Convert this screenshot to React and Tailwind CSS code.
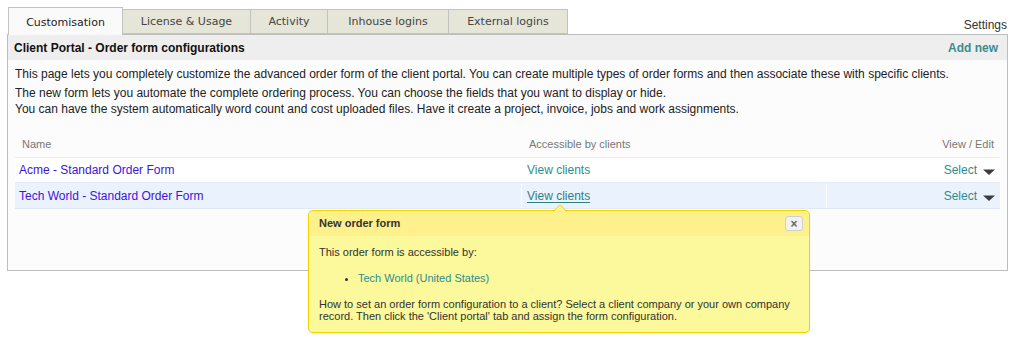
import React from 'react';

const tabs = ['Customisation', 'License & Usage', 'Activity', 'Inhouse logins', 'External logins'];
const tabWidths = ['w-[115px]', 'w-[128px]', 'w-[77px]', 'w-[121px]', 'w-[119px]'];

function Caret() {
  return (
    <svg width="12" height="7" viewBox="0 0 12 7" className="ml-[6px] mt-[4px]">
      <path d="M0 0.5 L12 0.5 L6 6 Z" fill="#3d3d3d" />
    </svg>
  );
}

export default function App() {
  return (
    <div className="relative w-[1015px] h-[344px] bg-white font-['Liberation_Sans',Arial,sans-serif] text-[12px] text-[#222]">
      {/* Tabs */}
      <div className="flex items-end px-[8px] pt-[7px] h-[34px]">
        {tabs.map((t, i) =>
          i === 0 ? (
            <div
              key={t}
              className={`${tabWidths[i]} h-[28px] pt-[3px] -mb-px relative z-10 bg-[#fafafa] border border-b-0 border-[#c2c2c2] flex items-center justify-center font-['DejaVu_Sans',Verdana,sans-serif] text-[11px] text-[#222]`}
            >
              {t}
            </div>
          ) : (
            <div
              key={t}
              className={`${tabWidths[i]} h-[25px] pt-[2px] bg-[#e6e6d8] border border-l-0 border-[#c2c2c2] flex items-center justify-center font-['DejaVu_Sans',Verdana,sans-serif] text-[11px] text-[#444]`}
            >
              {t}
            </div>
          )
        )}
        <div className="ml-auto pb-[3px] text-[12px] text-[#333] leading-none">Settings</div>
      </div>

      {/* Panel */}
      <div className="mx-[7px] h-[237px] border border-[#bdbdbd] bg-[#fcfcfc]">
        <div className="h-[25px] bg-[#eeeeee] flex items-center justify-between pl-[6px] pr-[9px]">
          <span className="font-bold text-[12px] text-[#111]">Client Portal - Order form configurations</span>
          <span className="font-bold text-[12px] text-[#3a8d8d]">Add new</span>
        </div>

        <div className="px-[7px] pt-[6px]">
          <p className="leading-[16px]">
            This page lets you completely customize the advanced order form of the client portal. You can create multiple types of order forms and then associate these with specific clients.
          </p>
          <p className="leading-[16px] mt-[3px]">
            The new form lets you automate the complete ordering process. You can choose the fields that you want to display or hide.
            <br />
            You can have the system automatically word count and cost uploaded files. Have it create a project, invoice, jobs and work assignments.
          </p>

          {/* Table */}
          <div className="mt-[15px] w-[985px]">
            <div className="flex h-[26px] items-center border-b border-[#ececec] text-[11px] text-[#777]">
              <div className="w-[507px] pl-[7px]">Name</div>
              <div className="w-[305px] pl-[7px]">Accessible by clients</div>
              <div className="flex-1 text-right pr-[6px]">View / Edit</div>
            </div>
            <div className="flex h-[25px] items-stretch border-b border-[#e6ecf3] bg-white">
              <div className="w-[507px] pl-[4px] flex items-center text-[#4214d6]">Acme - Standard Order Form</div>
              <div className="w-[305px] pl-[5px] flex items-center text-[#2f8c8c]">View clients</div>
              <div className="flex-1 flex items-center justify-end pr-[5px] text-[#2f8c8c]">
                Select
                <Caret />
              </div>
            </div>
            <div className="flex h-[26px] pt-[1px] items-stretch border-b border-[#dfe8f3] bg-[#eaf2fe]">
              <div className="w-[507px] pl-[4px] flex items-center text-[#4214d6] border-r border-white">Tech World - Standard Order Form</div>
              <div className="w-[305px] pl-[5px] flex items-center text-[#2f8080] border-r border-white">
                <span className="underline underline-offset-2">View clients</span>
              </div>
              <div className="flex-1 flex items-center justify-end pr-[5px] text-[#2f8c8c]">
                Select
                <Caret />
              </div>
            </div>
          </div>
        </div>
      </div>

      {/* Tooltip */}
      <div className="absolute left-[308px] top-[210px] w-[502px] h-[123px] rounded-[5px] border border-[#f2d400] bg-[#fbf99b] text-[11px] text-[#333] shadow-[0_1px_2px_rgba(0,0,0,0.08)]">
        <svg width="14" height="8" viewBox="0 0 14 8" className="absolute left-[244px] -top-[7px]">
          <path d="M0 8 L7 0.5 L14 8" fill="#fef08a" stroke="#f2d400" strokeWidth="1" />
        </svg>
        <div className="h-[25px] bg-[#fef08a] rounded-t-[5px] flex items-center justify-between pl-[10px] pr-[6px]">
          <span className="font-bold text-[#333]">New order form</span>
          <div className="w-[18px] h-[15px] rounded-[3px] border border-[#cfcfcf] bg-[#f2f2f2] flex items-center justify-center text-[12px] font-bold text-[#666] leading-none">
            ×
          </div>
        </div>
        <div className="px-[10px] pt-[10px]">
          <p className="leading-[13px]">This order form is accessible by:</p>
          <ul className="mt-[13px] pl-[39px] list-disc leading-[13px]">
            <li className="text-[#2f8c8c] marker:text-[#333]">Tech World (United States)</li>
          </ul>
          <p className="mt-[13px] leading-[12px]">
            How to set an order form configuration to a client? Select a client company or your own company record. Then click the 'Client portal' tab and assign the form configuration.
          </p>
        </div>
      </div>
    </div>
  );
}
